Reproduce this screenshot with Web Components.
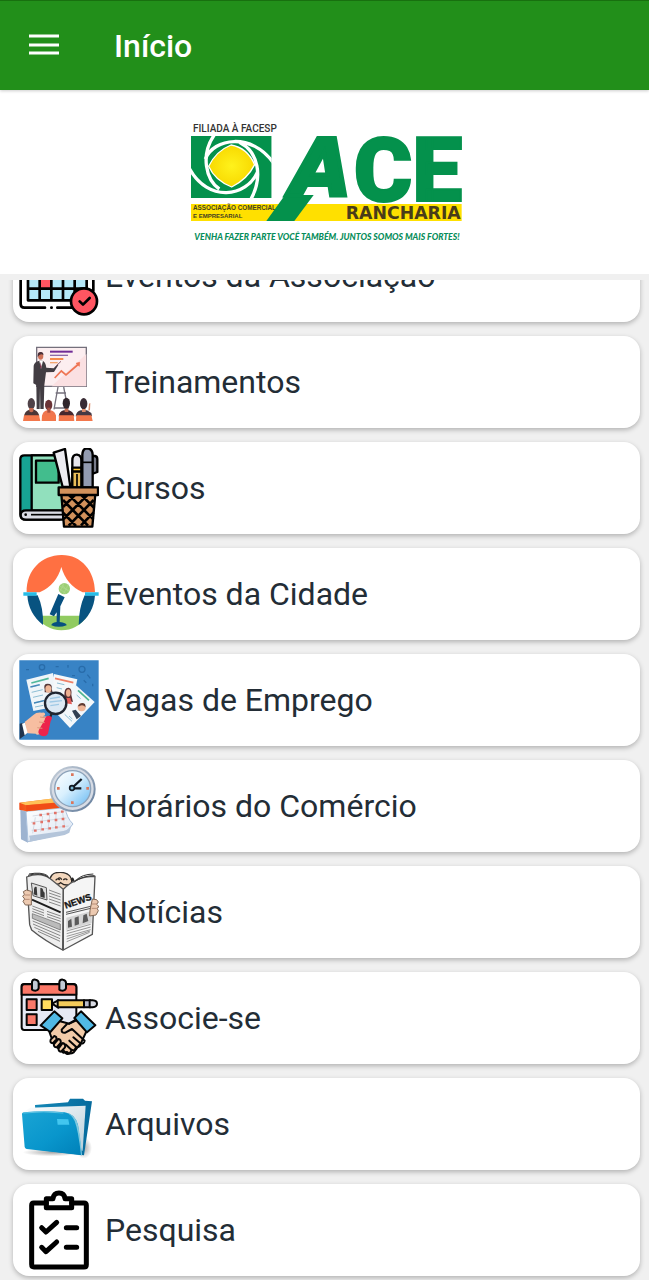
<!DOCTYPE html>
<html lang="pt-BR">
<head>
<meta charset="utf-8">
<meta name="viewport" content="width=device-width, initial-scale=1">
<title>Início</title>
<style>
    body {
        margin: 0;
        height: 100vh;
        display: flex;
        flex-direction: column;
        background: #f0f0f0;
        color: #232d36;
        font-family: Roboto, "Liberation Sans", sans-serif;
    }
</style>
</head>
<body>
<app-bar>Início</app-bar>
<brand-banner></brand-banner>
<menu-list>
    <menu-card label="Eventos da Associação">
        <!-- calendar with check -->
        <svg viewBox="57 -84 240 240" stroke-linecap="round" stroke-linejoin="round">
            <path d="M62 -55H280V80M62 -55V120Q62 131 73 131H135M154 131h1M172 131H215" fill="none" stroke="#000" stroke-width="8"/>
            <path d="M66 -52H277V-12H66Z" fill="#ff5561" stroke="#000" stroke-width="7"/>
            <path d="M84 5H260V109H84Z" fill="#b4e8f8"/>
            <path d="M119 40h34v34h-34z" fill="#ff5561"/>
            <path d="M84 5H260V109H84ZM84 40H260M84 74H260M119 5V109M154 5V109M189 5V109M224 5V109" fill="none" stroke="#000" stroke-width="8"/>
            <circle cx="252" cy="112" r="39" fill="#ff5561" stroke="#000" stroke-width="8"/>
            <path d="M239 112l10 10 20-20" fill="none" stroke="#000" stroke-width="8"/>
        </svg>
    </menu-card>
    <menu-card label="Treinamentos">
        <!-- speaker at the board -->
        <svg viewBox="27 24 240 240">
            <path d="M80 40H229V157H80Z" fill="#fceef0" stroke="#74707c" stroke-width="4"/>
            <path d="M229 60V157H125Z" fill="#fbe0e2"/>
            <path d="M144 159L132 226M161 159L174 226M137 177H168M134 222H172" fill="none" stroke="#74707c" stroke-width="4"/>
            <path d="M120 53H188" stroke="#6f2b96" stroke-width="6"/>
            <path d="M120 64H174" stroke="#8c6aa8" stroke-width="4"/>
            <path d="M120 75H160" stroke="#f58a4b" stroke-width="6"/>
            <path d="M120 86H143" stroke="#f5a66f" stroke-width="4"/>
            <path d="M134 132l20-21 14 12 38-33" fill="none" stroke="#ee7554" stroke-width="5"/>
            <path d="M198 88l11-3-1 12z" fill="#ee7554" stroke="#ee7554" stroke-width="2"/>
            <path d="M71 95Q73 83 88 80H97Q107 83 109 101L131 103 143 90 145 93 132 114 108 115 103 154 101 225H91L90 160 89 225H80L79 153 70 148Z" fill="#423d43"/>
            <path d="M88 80l5 25 6-25" fill="#fff"/>
            <path d="M92 84l3 15-2 6-3-6z" fill="#772b44"/>
            <ellipse cx="92" cy="66" rx="8" ry="11" fill="#ce7158"/>
            <path d="M83 64Q83 53 93 54Q101 55 100 63Q90 57 83 69Z" fill="#493039"/>
            <path d="M136 98L153 82" stroke="#8d6170" stroke-width="3"/>
            <path d="M42 247Q43 232 58 227L64 222 74 228Q86 233 88 247Z" fill="#4b3637"/>
            <ellipse cx="64" cy="209" rx="11" ry="17" fill="#4f4248"/><path d="M58 222h12v10q-6 6-12 0" fill="#c7694f"/>
            <path d="M96 247Q98 232 111 229H122Q136 232 138 247Z" fill="#ef7650"/>
            <ellipse cx="116" cy="213" rx="11" ry="16" fill="#693336"/><path d="M112 221h9v15h-9z" fill="#a75040"/>
            <path d="M146 247Q148 232 161 229H177Q190 234 193 247Z" fill="#46282e"/>
            <ellipse cx="169" cy="208" rx="11" ry="17" fill="#30252b"/><path d="M164 224h11v10h-11z" fill="#c36b4f"/>
            <path d="M197 247Q199 232 212 229H231L244 237 246 247Z" fill="#453944"/>
            <ellipse cx="221" cy="209" rx="11" ry="17" fill="#382a33"/><path d="M216 225h11v9h-11zM235 230l2-21 4-2-1 22z" fill="#db8b6a"/>
            <path d="M42 244H87L91 261H39ZM96 244H138V261H95ZM147 244H191L193 261H146ZM199 244H244L248 261H198Z" fill="#f3774b"/>
        </svg>
    </menu-card>
    <menu-card label="Cursos">
        <!-- book and pencil basket -->
        <svg viewBox="27 27 240 240" stroke="#000" stroke-width="7" stroke-linejoin="round">
            <path d="M43 49H148V242H48Q31 242 31 224V61Q31 49 43 49Z" fill="#17a394"/>
            <path d="M65 49H160V215H65Z" fill="#91e0bd"/>
            <path d="M78 65H146V131H78Z" fill="#42bd8d"/>
            <path d="M160 214H48Q32 214 32 228T48 242H160Z" fill="#dadbe4"/>
            <path d="M63 227H158" stroke-width="5"/><circle cx="47" cy="227" r="4" fill="#000" stroke="none"/>
            <path d="M131 41L165 30 181 144H158Z" fill="#edecf1"/>
            <path d="M187 145V65Q187 46 201 47 215 49 214 66V145Z" fill="#e6e5eb"/>
            <path d="M187 86H214V98H187Z" fill="#ffc839"/>
            <path d="M187 98H214V145H187Z" fill="#e9bd58"/><path d="M201 105V144" stroke-width="5"/>
            <path d="M246 51H255Q262 52 262 61V99L246 105Z" fill="#777b89"/>
            <path d="M217 145V47Q218 28 232 28 247 29 248 47V145Z" fill="#929bb0"/>
            <path d="M217 70H248" stroke-width="5"/>
            <path d="M154 165H256L247 263H162Z" fill="#d2915b"/>
            <path d="M159 183l75 77M175 166l75 75M212 166l41 41M159 221l39 40M251 183l-75 77M234 166l-73 74M197 166l-38 38M251 220l-38 39" stroke-width="8"/>
            <path d="M146 145H264V168H146Z" fill="#d2915b"/>
        </svg>
    </menu-card>
    <menu-card label="Eventos da Cidade">
        <!-- stage and microphone -->
        <svg viewBox="27 27 240 240">
            <circle cx="154" cy="143" r="111" fill="#fff"/>
            <path d="M77 212H233Q202 255 154 256 105 254 77 212Z" fill="#91cb61"/>
            <path d="M50 142C49 75 95 31 154 30S255 77 255 142H218Q169 120 154 66 139 120 89 142Z" fill="#ff7042"/>
            <path d="M52 151H83Q101 190 99 240Q55 205 52 151ZM255 151H224Q207 187 206 240Q251 207 255 151Z" fill="#085380"/>
            <path d="M40 142H80V152H40ZM225 142H266V152H225Z" fill="#28bce6"/>
            <path d="M145 147L164 157 151 184 149 231Q169 233 170 241 146 250 124 241 124 234 140 231L140 202 132 214 119 208Z" fill="#075080"/>
            <circle cx="163" cy="131" r="17" fill="#9ccf76"/>
            <path d="M149 123l28 14M154 117l21 23M148 131l20 15M163 114l-14 26M175 119l-15 28" stroke="#b1d991" stroke-width="2"/>
        </svg>
    </menu-card>
    <menu-card label="Vagas de Emprego">
        <!-- CVs under a magnifier -->
        <svg viewBox="27 25 240 240">
            <path d="M28 26H266V264H28Z" fill="#3883c5"/>
            <g fill="none" stroke="#286caa" stroke-width="4"><circle cx="96" cy="47" r="8"/><circle cx="216" cy="53" r="9"/><path d="M137 45h9M174 40v8M186 72h9M232 69l9 11M248 96v8M221 86l8 7M48 54h9"/></g>
            <path d="M49 84L129 64 150 162 70 178Z" fill="#eff5f9"/>
            <path d="M132 67L202 83 181 182 126 170Z" fill="#f5f8fa"/>
            <path d="M198 101L254 151 180 229 136 182Z" fill="#f3f7fa"/>
            <path d="M64 94l52-14" stroke="#50b89b" stroke-width="5"/><path d="M135 80l55 13" stroke="#ef8067" stroke-width="5"/>
            <path d="M65 106l25-6M65 122l33-8M69 137l30-7M72 154l30-8M75 166l25-5M141 94l22 5M140 108l16 4M139 122l15 3M200 130l12 11M177 193l10 9M164 188l22 21" stroke="#8dbed4" stroke-width="3"/>
            <path d="M61 106l28-7M72 154l31-7" stroke="#4386b8" stroke-width="4"/><path d="M204 116l33 30" stroke="#4eb58e" stroke-width="5"/>
            <path d="M104 113Q99 96 113 96 128 96 125 112L128 122H104Z" fill="#573939"/><ellipse cx="115" cy="112" rx="9" ry="11" fill="#efb798"/>
            <path d="M163 132Q162 107 176 108 187 110 184 130L189 151 159 145Z" fill="#5f3335"/><ellipse cx="175" cy="124" rx="7" ry="11" fill="#efb090"/><path d="M164 139h17l5 19-23-4z" fill="#e65c58"/>
            <circle cx="215" cy="167" r="12" fill="#efb698"/><path d="M203 164q9-16 22-7l2 10q-9-10-19-3z" fill="#5e3b34"/><path d="M186 177l11-3 16 19-13 10z" fill="#303e51"/>
            <circle cx="137" cy="155" r="31" fill="#dce9f4"/><path d="M120 141l30-5M119 151l37-4M121 162l26-4" stroke="#9fc9e5" stroke-width="4"/>
            <circle cx="137" cy="155" r="32" fill="none" stroke="#202631" stroke-width="7"/>
            <path d="M125 186l-7 17" stroke="#25242b" stroke-width="7"/>
            <path d="M29 216L40 213 51 246 29 262Z" fill="#21334c"/><path d="M36 216l9-3 11 28-12 10z" fill="#fff"/>
            <path d="M44 211L71 189Q79 181 96 183 107 181 105 191L98 194 113 195Q122 197 116 207L101 241Q82 254 77 246L53 245Z" fill="#f7bea1"/>
            <path d="M104 205Q107 190 119 193T122 208L114 246Q106 258 91 251 81 244 88 232Z" fill="#ed244b"/>
            <path d="M90 196l15 2M87 211l17 2M82 228l15 2" stroke="#dc967b" stroke-width="3"/>
        </svg>
    </menu-card>
    <menu-card label="Horários do Comércio">
        <!-- calendar and wall clock -->
        <svg viewBox="27 24 240 240">
            <defs>
                <linearGradient id="glass" x2="1" y2="1"><stop stop-color="#fff"/><stop offset=".45" stop-color="#d9f0fe"/><stop offset="1" stop-color="#66b8f2"/></linearGradient>
                <linearGradient id="sun"><stop stop-color="#f34b16"/><stop offset="1" stop-color="#ffc548"/></linearGradient>
                <linearGradient id="sheet" x2="1" y2="1"><stop stop-color="#fff"/><stop offset="1" stop-color="#d9e4f2"/></linearGradient>
                <linearGradient id="rim" x2="1" y2="1"><stop stop-color="#c9d2dc"/><stop offset="1" stop-color="#627b9a"/></linearGradient>
            </defs>
            <path d="M31 155L48 160 54 254 33 244Z" fill="#9db3d0"/>
            <path d="M48 160L166 149Q169 179 189 198L165 226 54 251Z" fill="url(#sheet)" stroke="#a9c0dc" stroke-width="3"/>
            <path d="M56 252Q62 246 57 233L160 219Q169 219 177 211L184 204 178 224 164 231Z" fill="#b4c5da"/>
            <path d="M28 134L140 120 166 148 49 160 28 155Z" fill="url(#sun)"/><path d="M29 134L140 120 155 132 48 142Z" fill="#ffc157"/>
            <path d="M48 142L158 132 165 148 49 160Z" fill="#f14c17"/>
            <path d="M68 174L164 160M63 193L169 180M65 217L176 204M76 178l-8 48M98 174l-6 47M119 171l-5 46M138 168l-1 45M158 165l6 42" stroke="#c7cbd6" stroke-width="2"/>
            <path d="M88 171h8M110 168h8M132 165h8M153 161h8M68 196h8M91 192h8M112 189h8M134 186h8M155 183h8M72 218h8M94 214h8M115 211h8M135 208h8M157 205h8" stroke="#e27368" stroke-width="7"/>
            <circle cx="188" cy="93" r="66" fill="#d7dce5" stroke="url(#rim)" stroke-width="6"/>
            <circle cx="188" cy="92" r="54" fill="url(#glass)" stroke="#8da3ba" stroke-width="4"/>
            <path d="M183 50h8M183 134h8M141 91h8M229 91h8" stroke="#db755b" stroke-width="8"/>
            <path d="M186 90L215 63M186 91H214" stroke="#111923" stroke-width="7"/><circle cx="186" cy="90" r="7" fill="#7cb9d6" stroke="#111923" stroke-width="5"/>
        </svg>
    </menu-card>
    <menu-card label="Notícias">
        <!-- man reading the newspaper -->
        <svg viewBox="27 24 240 240">
            <path d="M119 58Q117 24 151 25 190 26 186 65L156 79Z" fill="#f3d7bd" stroke="#312e2c" stroke-width="4"/>
            <path d="M125 46q-6 8 0 15M185 43q7 8 0 17" stroke="#252525" stroke-width="9"/>
            <path d="M137 49q6-8 12-1M160 48q6-7 12 0M130 60q17 3 22-4 15 11 27 5M145 43q7-4 10 4" fill="none" stroke="#26211e" stroke-width="4"/>
            <path d="M50 39Q91 23 119 43L160 76 158 258Q104 230 65 198L59 182Z" fill="#eee" stroke="#555" stroke-width="4"/>
            <path d="M160 76Q197 37 255 37L247 211 160 258Z" fill="#f5f5f5" stroke="#555" stroke-width="4"/>
            <path d="M57 30Q94 23 113 35M54 34Q92 23 117 40M199 48Q216 31 250 30M191 55Q220 34 254 35" fill="none" stroke="#333" stroke-width="3"/>
            <path d="M64 57L109 71 111 108 69 95Z" fill="#dedede" stroke="#555" stroke-width="3"/>
            <path d="M72 82q-1-17 8-13l2 26-11-4zM91 98V72q8-2 9 10l4 4v16z" fill="#393939"/>
            <path d="M117 78l35 13M117 87l35 12M117 96l35 12M117 105l35 12M117 114l35 12M67 126l35 13M67 134l35 13M67 142l35 13M111 142l41 14M111 150l41 14M111 158l41 14M68 162l83 34M68 171l83 34M69 180l82 35M73 190l77 34M84 202l66 30" stroke="#878787" stroke-width="3"/>
            <path d="M66 107L152 145" stroke="#1d1d1d" stroke-width="6"/><path d="M67 149l84 31v18L67 163z" fill="#bbb" stroke="#666" stroke-width="2"/>
            <text x="167" y="134" font-family="Liberation Sans Narrow, Liberation Sans, sans-serif" font-size="28" font-weight="700" fill="#151515" stroke="#151515" transform="rotate(-19 167 134)">NEWS</text>
            <path d="M168 145L246 126M168 151L246 132" stroke="#555" stroke-width="3"/>
            <path d="M169 161L245 141V177L169 198Z" fill="#d5d5d5"/><path d="M174 191v-20l10-7 2 24zM194 185v-24l12-4 1 24zM218 178l2-24 10-5 5 22z" fill="#5b5b5b"/>
            <path d="M170 201l72-20M170 209l72-20M170 217l72-20M170 225l70-24M170 233l69-28" stroke="#999" stroke-width="3"/>
            <path d="M49 78l15 4v41H46l-7-11 5-7-6-8 5-6-3-8zM247 105l13 2 5 7-5 7 7 7-6 5 4 7-7 13-19 3 1-17z" fill="#edcab1" stroke="#806755" stroke-width="3"/>
            <path d="M43 93h17M43 106h16M246 120h15M245 133h15" stroke="#b78d76" stroke-width="3"/>
        </svg>
    </menu-card>
    <menu-card label="Associe-se">
        <!-- calendar, pencil and handshake -->
        <svg viewBox="27 24 240 240" stroke="#050505" stroke-width="6" stroke-linecap="round" stroke-linejoin="round">
            <path d="M35 47Q35 42 43 42H190Q199 42 199 51V180H43Q35 180 35 172Z" fill="#e6e9f4"/>
            <path d="M35 74V51Q35 43 43 43H190Q199 43 199 51V74Z" fill="#fb7767"/>
            <path d="M66 59V36Q68 27 77 29 85 30 86 38V55Q84 62 76 62 69 62 66 59ZM148 59V36Q150 27 159 29 167 30 168 38V55Q166 62 158 62 150 62 148 59Z" fill="#c2cad5"/>
            <path d="M50 88H80V120H50ZM50 133H80V165H50Z" fill="#f9796a"/><path d="M95 88H126V120H95Z" fill="#ffdc5e"/>
            <path d="M126 101L145 91V113Z" fill="#f8efd8"/><path d="M143 91H222V112H143Z" fill="#f4cc5b"/><path d="M222 91H241V112H222Z" fill="#b8bbc9"/><path d="M239 91H248Q261 92 261 101T248 112H239Z" fill="#d9dbe3"/>
            <path d="M139 151L178 161 207 147 231 180 214 217 191 247Q179 255 171 246L160 248 148 238 137 228 129 216 118 185Z" fill="#f2cba8"/>
            <path d="M92 166L133 124 157 145 121 186Z" fill="#51b9e5"/><path d="M193 144L213 124 256 166 231 187Z" fill="#51b9e5"/>
            <path d="M171 162L155 179Q154 190 166 188L186 177 224 212Q222 223 211 220L190 202M213 219Q210 234 198 230L178 212M198 231Q194 245 184 239L168 224M184 241Q179 257 168 250L159 240M177 161L198 149" fill="none"/>
            <path d="M122 209l11-11q8 2 6 10l-11 12q-9-1-6-11zM132 222l13-15q9 1 7 12l-12 13q-10-1-8-10zM146 235l12-16q10 3 7 13l-12 13q-9-1-7-10z" fill="#f2cba8"/>
        </svg>
    </menu-card>
    <menu-card label="Arquivos">
        <!-- blue folder -->
        <svg viewBox="27 21 240 240">
            <defs>
                <linearGradient id="front" x2="1" y2="1"><stop stop-color="#1aa4d4"/><stop offset=".55" stop-color="#0996cc"/><stop offset="1" stop-color="#0080b8"/></linearGradient>
                <linearGradient id="back" x2="1"><stop stop-color="#1387b6"/><stop offset="1" stop-color="#066b9d"/></linearGradient>
                <linearGradient id="paper" x2="1" y2="1"><stop stop-color="#fff"/><stop offset="1" stop-color="#b8cfda"/></linearGradient>
                <radialGradient id="shade"><stop stop-color="#777" stop-opacity=".65"/><stop offset="1" stop-color="#777" stop-opacity="0"/></radialGradient>
            </defs>
            <ellipse cx="221" cy="213" rx="25" ry="32" fill="url(#shade)"/><ellipse cx="128" cy="226" rx="90" ry="12" fill="url(#shade)"/>
            <path d="M75 84L174 76 180 65 219 65 225 71 246 73 222 235 82 218Z" fill="url(#back)"/>
            <path d="M40 106L60 92 227 86 218 221 91 210Z" fill="url(#paper)"/>
            <path d="M41 106Q102 99 164 106 193 109 204 143L216 235 50 216Q45 215 44 210L36 112Q35 107 41 106Z" fill="url(#front)"/>
            <path d="M170 107Q190 112 200 132 210 160 216 235L213 234Q205 161 194 132 186 114 170 107Z" fill="#7cc8df"/>
            <path d="M141 126L175 127 178 143H143Z" fill="#42c6ef"/>
            <path d="M40 108Q101 101 160 108" fill="none" stroke="#83d4ec" stroke-width="2"/>
        </svg>
    </menu-card>
    <menu-card label="Pesquisa">
        <!-- clipboard checklist -->
        <svg viewBox="27 27 240 240" fill="none" stroke="#000" stroke-width="15" stroke-linecap="round" stroke-linejoin="round">
            <path d="M109 66H71Q65 66 65 73V250Q65 258 72 258H222Q229 258 229 251V73Q229 66 222 66H185"/>
            <path d="M109 80V53H129Q131 36 147 36T165 53H185V80Z"/>
            <path d="M95 140L108 153 140 124M169 140H200M95 199L108 212 140 183M169 199H200"/>
        </svg>
    </menu-card>
</menu-list>

<script>
class AppBar extends HTMLElement {
    connectedCallback() {
        this.attachShadow({ mode: 'open' });
        this.shadowRoot.innerHTML = `
            <style>
                :host {
                    display: block;
                    position: relative;
                    z-index: 2;
                    background: #228f1a;
                    border-top: 1px solid #18700f;
                    box-shadow: 0 1px 3px rgba(0, 0, 0, 0.2);
                    color: #fff;
                }
                header {
                    display: flex;
                    align-items: center;
                    gap: 46px;
                    padding: 23px 20px 22px;
                }
                button {
                    display: flex;
                    padding: 8px;
                    border: 0;
                    background: none;
                    color: inherit;
                    cursor: pointer;
                }
                svg {
                    width: 32px;
                    height: 28px;
                }
                h1 {
                    margin: 0;
                    font-size: 32px;
                    line-height: 40px;
                    font-weight: 500;
                }
            </style>
            <header>
                <button type="button" aria-label="Menu">
                    <svg viewBox="0 0 32 28"><path d="M1 4h30M1 13h30M1 21h30" stroke="currentColor" stroke-width="3"/></svg>
                </button>
                <h1><slot></slot></h1>
            </header>
        `;
    }
}

class BrandBanner extends HTMLElement {
    connectedCallback() {
        this.attachShadow({ mode: 'open' });
        this.shadowRoot.innerHTML = `
            <style>
                :host {
                    display: flex;
                    justify-content: center;
                    padding: 25px 16px 24px;
                    margin-bottom: 6px;
                    background: #fff;
                }
                svg {
                    width: 290px;
                    height: 135px;
                }
                text {
                    font-family: "Liberation Sans", sans-serif;
                    font-weight: 700;
                }
                .ace {
                    font-family: Roboto, sans-serif;
                    font-weight: 900;
                    fill: #04914c;
                    stroke: #04914c;
                    stroke-width: 6px;
                }
                .slanted {
                    font-family: "DejaVu Sans", sans-serif;
                    font-style: italic;
                    stroke-width: 12px;
                }
            </style>
            <svg viewBox="0 0 870 405" role="img" aria-label="ACE Rancharia">
                <defs>
                    <clipPath id="square"><path d="M33 63H275V249H33Z"/></clipPath>
                    <radialGradient id="core"><stop stop-color="#fff21c"/><stop offset="1" stop-color="#f8d900"/></radialGradient>
                </defs>
                <text x="39" y="52" style="font-family: Roboto, sans-serif; font-weight: 500" font-size="30" fill="#333">FILIADA À FACESP</text>
                <g clip-path="url(#square)">
                    <path d="M33 63H275V249H33Z" fill="#04914c"/>
                    <g fill="none" stroke="#fff" stroke-width="10">
                        <path d="M118 222C78 195 60 120 104 58"/>
                        <path d="M76 132C100 70 215 50 281 145"/>
                        <path d="M178 82C235 110 250 185 212 254"/>
                        <path d="M232 172C200 245 85 265 28 160"/>
                    </g>
                    <path d="M86 154Q108 108 153 90 202 98 224 149 202 193 155 216 105 197 86 154Z" fill="url(#core)" stroke="#fff" stroke-width="4"/>
                </g>
                <path d="M33 267H845V318H33Z" fill="#ffe000"/>
                <text x="39" y="285" font-size="19" fill="#444020">ASSOCIAÇÃO COMERCIAL</text>
                <text x="39" y="309" font-size="18" fill="#444020">E EMPRESARIAL</text>
                <path d="M315 240H401L343 318H259Z" fill="#04914c"/>
                <text class="ace slanted" x="332" y="241" font-size="236">A</text>
                <text class="ace" x="521" y="259" font-size="268">CE</text>
                <text x="497" y="312" style="font-family: 'DejaVu Sans', sans-serif" font-size="52" fill="#493c19">RANCHARIA</text>
                <text x="43" y="374" style="font-family: Lato, sans-serif; font-weight: 900" font-size="26" font-style="italic" fill="#078d5a">VENHA FAZER PARTE VOCÊ TAMBÉM. JUNTOS SOMOS MAIS FORTES!</text>
            </svg>
        `;
    }
}

class MenuCard extends HTMLElement {
    connectedCallback() {
        const label = this.getAttribute('label') || '';

        this.attachShadow({ mode: 'open' });
        this.shadowRoot.innerHTML = `
            <style>
                :host {
                    display: block;
                }
                .card {
                    display: flex;
                    align-items: center;
                    gap: 6px;
                    padding: 6px;
                    border-radius: 16px;
                    background: #fff;
                    box-shadow: 0 2px 5px rgba(0, 0, 0, 0.26);
                    color: inherit;
                    text-decoration: none;
                }
                .label {
                    font-size: 32px;
                    line-height: 40px;
                }
                ::slotted(svg) {
                    display: block;
                    flex: none;
                    width: 80px;
                    height: 80px;
                }
            </style>
            <a class="card" href="#">
                <slot></slot>
                <span class="label">${label}</span>
            </a>
        `;
    }
}

class MenuList extends HTMLElement {
    connectedCallback() {
        this.attachShadow({ mode: 'open' });
        this.shadowRoot.innerHTML = `
            <style>
                :host {
                    display: block;
                    flex: 1;
                    min-height: 0;
                    overflow-y: auto;
                    scrollbar-width: none;
                }
                nav {
                    display: flex;
                    flex-direction: column;
                    gap: 14px;
                    padding: 8px 9px 4px 13px;
                }
            </style>
            <nav><slot></slot></nav>
        `;
        // open at the end of the list
        this.scrollTop = this.scrollHeight;
    }
}

customElements.define('app-bar', AppBar);
customElements.define('brand-banner', BrandBanner);
customElements.define('menu-card', MenuCard);
customElements.define('menu-list', MenuList);
</script>
</body>
</html>
